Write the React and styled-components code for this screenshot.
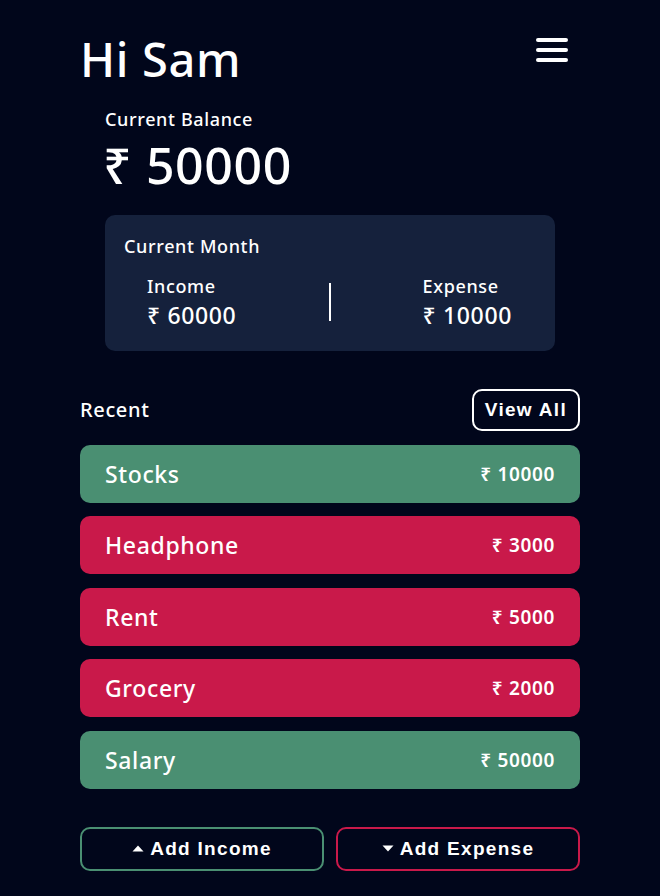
import React from "react";
import styled, { createGlobalStyle } from "styled-components";

const GlobalStyle = createGlobalStyle`
  html, body {
    margin: 0;
    background: #01061b;
    font-family: "Noto Sans", "DejaVu Sans", sans-serif;
    letter-spacing: 0.04em;
    color: #ffffff;
  }
`;

const Page = styled.div`
  width: 500px;
  margin: 0 auto;
  padding: 26px 0 25px;
`;

const Header = styled.div`
  display: flex;
  justify-content: space-between;
  align-items: flex-start;
`;

const Greeting = styled.h1`
  margin: 0;
  font-size: 47px;
  font-weight: 500;
  line-height: 66px;
`;

const MenuButton = styled.button`
  display: flex;
  flex-direction: column;
  gap: 6px;
  margin: 12px 12px 0 0;
  padding: 0;
  border: none;
  background: none;
  cursor: pointer;

  span {
    display: block;
    width: 32px;
    height: 4px;
    border-radius: 2px;
    background: #fff;
  }
`;

const Balance = styled.div`
  padding: 16px 24px 0 25px;
`;

const Label = styled.div`
  font-size: ${p => p.size || 18}px;
  font-weight: 500;
  line-height: 1.3;
`;

const BigAmount = styled.div`
  font-size: 50px;
  font-weight: 500;
  line-height: 68px;
  margin-left: -2px;
`;

const MonthCard = styled.div`
  margin: 16px 25px 0;
  padding: 20px 24px 22px 19px;
  background: #15213c;
  border-radius: 10px;
`;

const MonthRow = styled.div`
  display: flex;
  align-items: center;
  justify-content: space-between;
  padding: 16px 19px 0 23px;
`;

const Stat = styled.div`
  display: flex;
  flex-direction: column;
  gap: 4px;
`;

const StatValue = styled.div`
  font-size: 23px;
  font-weight: 500;
  line-height: 1.15;
`;

const Divider = styled.div`
  width: 2px;
  height: 38px;
  background: #fff;
`;

const RecentHeader = styled.div`
  display: flex;
  justify-content: space-between;
  align-items: center;
  margin-top: 38px;
`;

const OutlineButton = styled.button`
  display: flex;
  align-items: center;
  justify-content: center;
  gap: 6px;
  height: ${p => p.h || 42}px;
  padding: 0 11px;
  border: 2px solid ${p => p.color || "#fff"};
  border-radius: 10px;
  background: transparent;
  color: #fff;
  font-family: "Liberation Sans", Arial, sans-serif;
  font-weight: 700;
  font-size: 19px;
  letter-spacing: 1.3px;
  cursor: pointer;
`;

const List = styled.div`
  display: flex;
  flex-direction: column;
  gap: 13.5px;
  margin-top: 14px;
`;

const Item = styled.div`
  display: flex;
  justify-content: space-between;
  align-items: center;
  height: 58px;
  padding: 0 25px;
  border-radius: 10px;
  background: ${p => (p.type === "income" ? "#4a8f72" : "#c9194a")};
`;

const ItemName = styled.span`
  font-size: 23px;
  font-weight: 500;
`;

const ItemAmount = styled.span`
  font-size: 19px;
  font-weight: 600;
`;

const Actions = styled.div`
  display: grid;
  grid-template-columns: 1fr 1fr;
  gap: 12px;
  margin-top: 38px;
`;

const Triangle = styled.svg`
  width: 12px;
  height: 7px;
  fill: #fff;
`;

const items = [
  { name: "Stocks", amount: 10000, type: "income" },
  { name: "Headphone", amount: 3000, type: "expense" },
  { name: "Rent", amount: 5000, type: "expense" },
  { name: "Grocery", amount: 2000, type: "expense" },
  { name: "Salary", amount: 50000, type: "income" },
];

export default function App() {
  return (
    <>
      <GlobalStyle />
      <Page>
        <Header>
          <Greeting>Hi Sam</Greeting>
          <MenuButton aria-label="menu">
            <span />
            <span />
            <span />
          </MenuButton>
        </Header>

        <Balance>
          <Label>Current Balance</Label>
          <BigAmount>₹ 50000</BigAmount>
        </Balance>

        <MonthCard>
          <Label>Current Month</Label>
          <MonthRow>
            <Stat>
              <Label>Income</Label>
              <StatValue>₹ 60000</StatValue>
            </Stat>
            <Divider />
            <Stat>
              <Label>Expense</Label>
              <StatValue>₹ 10000</StatValue>
            </Stat>
          </MonthRow>
        </MonthCard>

        <RecentHeader>
          <Label size={20}>Recent</Label>
          <OutlineButton>View All</OutlineButton>
        </RecentHeader>

        <List>
          {items.map(item => (
            <Item key={item.name} type={item.type}>
              <ItemName>{item.name}</ItemName>
              <ItemAmount>₹ {item.amount}</ItemAmount>
            </Item>
          ))}
        </List>

        <Actions>
          <OutlineButton h={44} color="#4a8f72">
            <Triangle viewBox="0 0 12 7"><path d="M6 0.5 L11.5 6.5 L0.5 6.5 Z" /></Triangle>
            Add Income
          </OutlineButton>
          <OutlineButton h={44} color="#c9194a">
            <Triangle viewBox="0 0 12 7"><path d="M0.5 0.5 L11.5 0.5 L6 6.5 Z" /></Triangle>
            Add Expense
          </OutlineButton>
        </Actions>
      </Page>
    </>
  );
}
